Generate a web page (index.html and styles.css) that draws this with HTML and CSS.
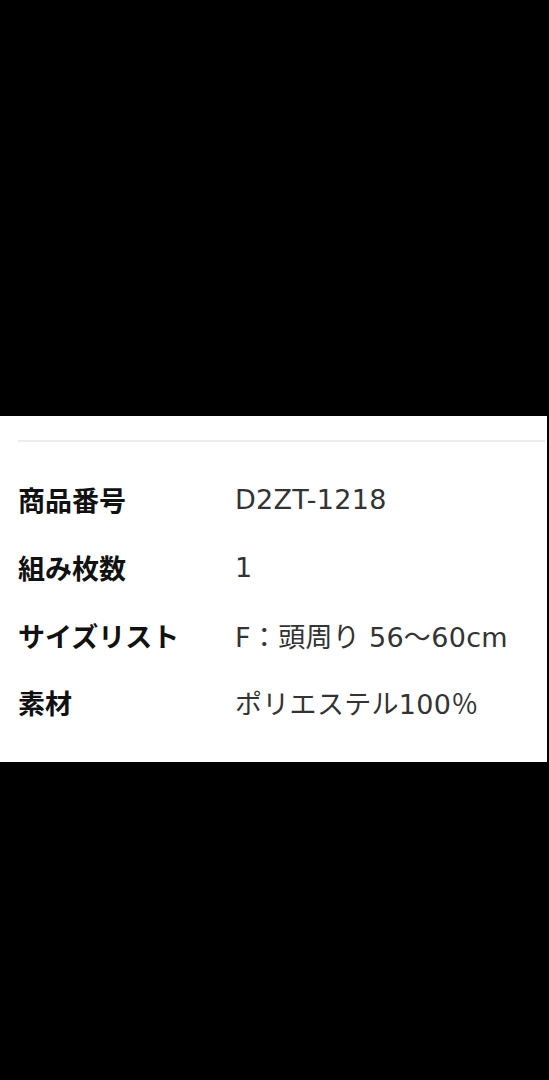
FILE: index.html
```html
<!DOCTYPE html>
<html lang="ja">
<head>
    <meta charset="UTF-8">
    <meta name="viewport" content="width=device-width, initial-scale=1.0">
    <title>商品情報</title>
    <link rel="stylesheet" href="styles.css">
</head>
<body>

<div class="panel">
    <div class="divider"></div>

    <!-- 商品スペック -->
    <dl class="spec">
        <dt>商品番号</dt>
        <dd>D2ZT-1218</dd>

        <dt>組み枚数</dt>
        <dd>1</dd>

        <dt>サイズリスト</dt>
        <dd>F：頭周り 56〜60cm</dd>

        <dt>素材</dt>
        <dd>ポリエステル100％</dd>
    </dl>
</div>

</body>
</html>
```

FILE: styles.css
```css
/* ===== Dasar ===== */
body {
    margin: 0;
    height: 1080px;
    background: #000;
    font-family: 'Noto Sans CJK JP', 'Noto Sans', sans-serif;
    overflow: hidden;
}

/* ===== Panel putih ===== */
.panel {
    margin-top: 416px;
    width: 547px;
    height: 346px;
    background: #fff;
    padding-top: 24px;
    box-sizing: border-box;
}

.divider {
    height: 2px;
    margin-left: 18px;
    margin-right: 2px;
    background: #ececec;
}

/* ===== Tabel spesifikasi ===== */
.spec {
    display: grid;
    grid-template-columns: 217px 1fr;
    grid-auto-rows: 67.7px;
    margin: 24px 0 0 18px;
    align-items: center;
}

.spec dt {
    font-size: 27px;
    font-weight: bold;
    color: #111;
}

.spec dd {
    margin: 0;
    font-family: 'DejaVu Sans', 'Noto Sans CJK JP', sans-serif;
    font-size: 27px;
    letter-spacing: 0.3px;
    color: #333;
}
```
